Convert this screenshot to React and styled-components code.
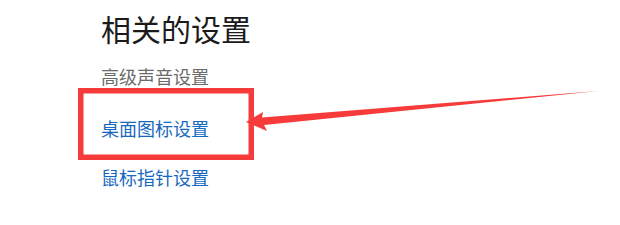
import React from "react";
import styled, { createGlobalStyle } from "styled-components";

const GlobalStyle = createGlobalStyle`
  html, body {
    margin: 0;
    padding: 0;
    background: #ffffff;
  }
  body {
    font-family: "Noto Sans CJK SC", "Noto Sans", sans-serif;
  }
`;

const Page = styled.div`
  position: relative;
  width: 620px;
  height: 225px;
  overflow: hidden;
  background: #ffffff;
`;

const Section = styled.div`
  display: flex;
  flex-direction: column;
  align-items: flex-start;
  padding: 13px 0 0 101px;
`;

const Title = styled.h2`
  margin: 0;
  font-size: 30px;
  font-weight: 400;
  line-height: 30px;
  color: #1b1b1b;
`;

const Item = styled.a`
  display: block;
  font-size: 18px;
  line-height: 18px;
  color: ${({ $muted }) => ($muted ? "#6b6b6b" : "#1769c0")};
  text-decoration: none;
  margin-top: ${({ $gap }) => $gap}px;
  cursor: pointer;
`;

const Annotation = styled.svg`
  position: absolute;
  left: 0;
  top: 0;
  pointer-events: none;
`;

export default function App() {
  return (
    <Page>
      <GlobalStyle />
      <Section>
        <Title>相关的设置</Title>
        <Item $muted $gap={24}>高级声音设置</Item>
        <Item $gap={34}>桌面图标设置</Item>
        <Item $gap={31}>鼠标指针设置</Item>
      </Section>
      <Annotation width="620" height="225" viewBox="0 0 620 225">
        <rect
          x="80.75"
          y="90.75"
          width="170.5"
          height="66.5"
          fill="none"
          stroke="#f73b3b"
          strokeWidth="5.5"
        />
        <polygon
          points="246,122 263,112 262,117.5 598,91 264,125 267,131"
          fill="#f73b3b"
        />
      </Annotation>
    </Page>
  );
}
